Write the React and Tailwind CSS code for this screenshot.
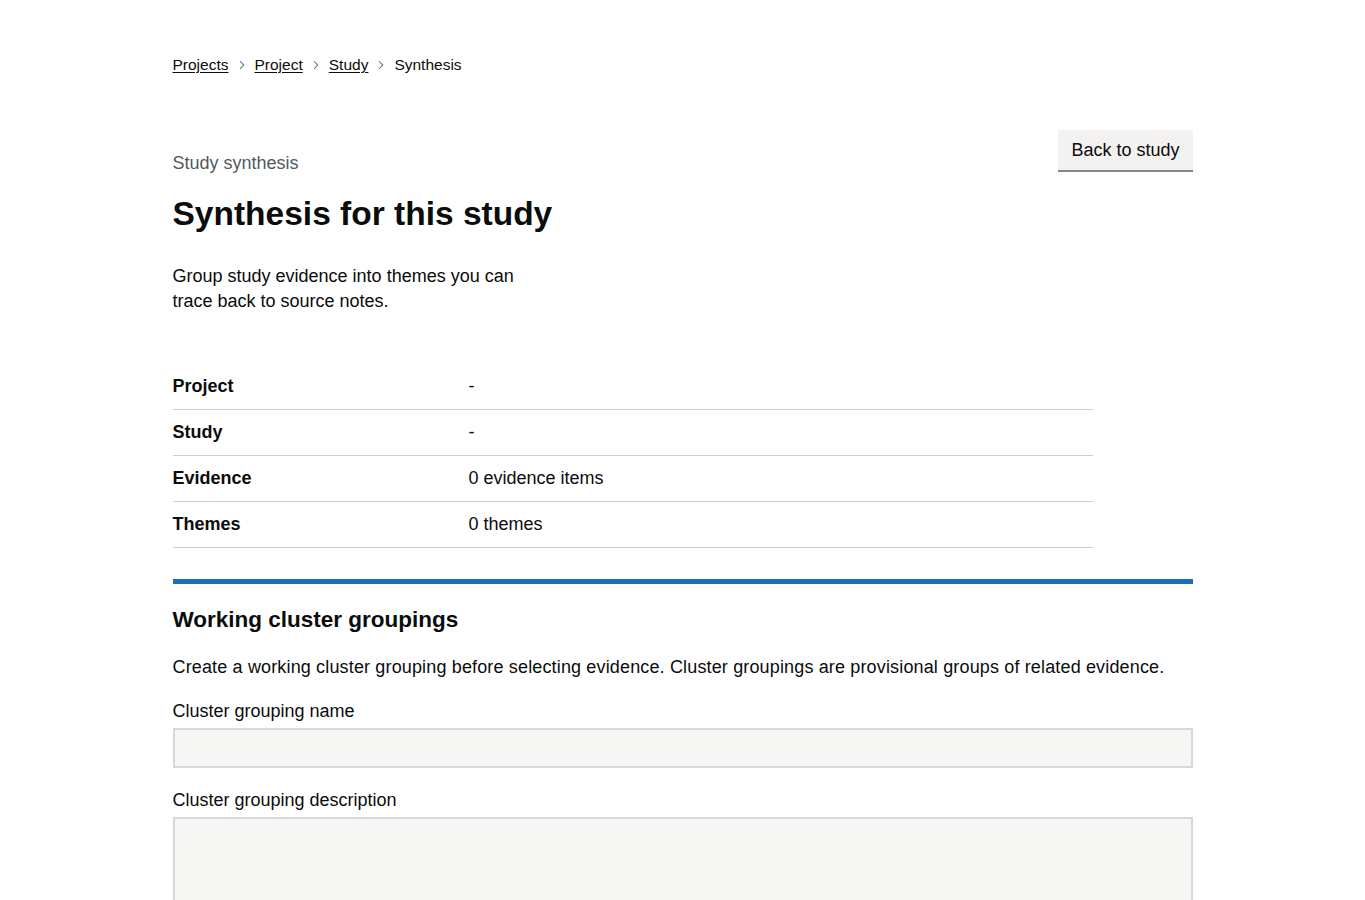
import { ChevronRight } from "lucide-react";

const crumbs = ["Projects", "Project", "Study"];

const rows = [
  { key: "Project", value: "-" },
  { key: "Study", value: "-" },
  { key: "Evidence", value: "0 evidence items" },
  { key: "Themes", value: "0 themes" },
];

export default function App() {
  return (
    <div className="min-h-screen bg-white text-[#0b0c0c]" style={{ fontFamily: '"Liberation Sans", Arial, sans-serif' }}>
      <main className="mx-auto w-[1020px] pt-[55px]">
        {/* breadcrumbs */}
        <nav className="flex items-center text-[15.5px] leading-[20px]">
          {crumbs.map((c) => (
            <span key={c} className="flex items-center">
              <a href="#" className="underline underline-offset-2 decoration-1 text-[#0b0c0c]">{c}</a>
              <ChevronRight className="mx-[6px] h-[14px] w-[14px] text-[#505a5f]" strokeWidth={1.75} />
            </span>
          ))}
          <span>Synthesis</span>
        </nav>

        <div className="mt-[55px] flex items-start justify-between">
          <div>
            <p className="mt-[21px] text-[18px] leading-[25px] text-[#505a5f]">Study synthesis</p>
            <h1 className="mt-[18px] text-[33.5px] leading-[40px] font-bold">Synthesis for this study</h1>
            <p className="mt-[30px] max-w-[370px] text-[18px] leading-[25px]">
              Group study evidence into themes you can trace back to source notes.
            </p>
          </div>
          <button className="h-[40px] bg-[#f3f2f1] px-[13px] text-[18px] leading-[25px] shadow-[0_2px_0_#858686]">
            Back to study
          </button>
        </div>

        {/* summary list */}
        <dl className="mt-[50px] w-[920px] text-[18px] leading-[25px]">
          {rows.map((r) => (
            <div key={r.key} className="flex border-b border-[#cecece] pt-[10px] pb-[10px]">
              <dt className="w-[296px] font-bold">{r.key}</dt>
              <dd>{r.value}</dd>
            </div>
          ))}
        </dl>

        <section className="mt-[31px] border-t-[5px] border-[#1d70b8] pt-[21px]">
          <h2 className="text-[22.5px] leading-[30px] font-bold">Working cluster groupings</h2>
          <p className="mt-[20px] text-[18px] leading-[25px] tracking-[0.15px]">
            Create a working cluster grouping before selecting evidence. Cluster groupings are provisional groups of related evidence.
          </p>

          <label className="mt-[19px] block text-[18px] leading-[25px]">Cluster grouping name</label>
          <input className="mt-[4px] block h-[40px] w-full border-2 border-[#d8d8d8] bg-[#f6f6f4] px-2 text-[18px] outline-none" />

          <label className="mt-[20px] block text-[18px] leading-[25px]">Cluster grouping description</label>
          <textarea className="mt-[4px] block h-[140px] w-full resize-none border-2 border-[#d8d8d8] bg-[#f6f6f4] p-2 text-[18px] outline-none" />
        </section>
      </main>
    </div>
  );
}
